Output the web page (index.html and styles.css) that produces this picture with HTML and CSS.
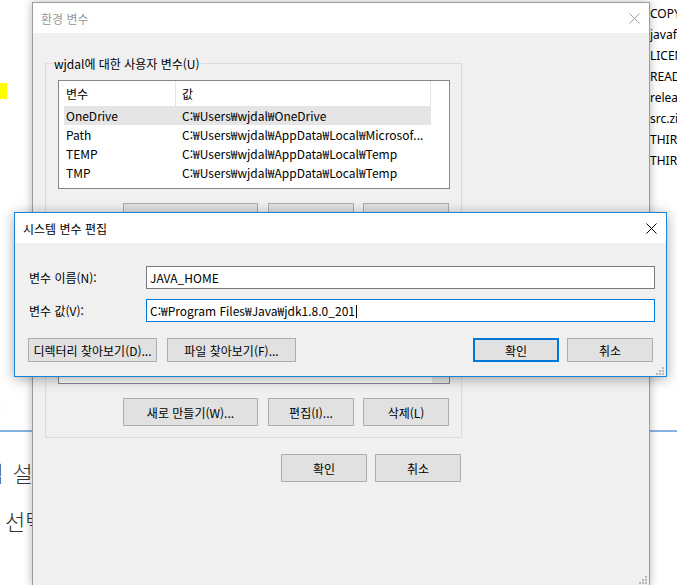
FILE: index.html
```html
<!DOCTYPE html>
<html lang="ko">
<head>
<meta charset="utf-8">
<title>시스템 변수 편집</title>
<link rel="stylesheet" href="styles.css">
</head>
<body>
<div class="desktop">
  <div class="page-left">
    <div class="mark"></div>
    <div class="frag">설정</div>
    <div class="rule"></div>
    <div class="big big1">템 설정</div>
    <div class="big big2">선택</div>
  </div>
  <div class="page-right">
    <ul class="files">
      <li>COPYRIGHT</li>
      <li>javafx-src.zip</li>
      <li>LICENSE</li>
      <li>README.html</li>
      <li>release</li>
      <li>src.zip</li>
      <li>THIRDPARTYLICENSEREADME.txt</li>
      <li>THIRDPARTYLICENSEREADME-JAVAFX.txt</li>
    </ul>
    <div class="rule rule-r"></div>
  </div>

  <div class="win env">
    <div class="titlebar">
      <span class="title">환경 변수</span>
      <svg class="close" width="11" height="11" viewBox="0 0 11 11"><path d="M0.5 0.5 L10.5 10.5 M10.5 0.5 L0.5 10.5" stroke="#9a9a9a" stroke-width="1"/></svg>
    </div>
    <div class="env-body">
      <div class="group">
        <div class="legend">wjdal에 대한 사용자 변수(U)</div>
        <div class="list">
          <div class="lhead"><div class="c1">변수</div><div class="c2">값</div></div>
          <div class="row sel"><div class="c1">OneDrive</div><div class="c2">C:₩Users₩wjdal₩OneDrive</div></div>
          <div class="row"><div class="c1">Path</div><div class="c2">C:₩Users₩wjdal₩AppData₩Local₩Microsof...</div></div>
          <div class="row"><div class="c1">TEMP</div><div class="c2">C:₩Users₩wjdal₩AppData₩Local₩Temp</div></div>
          <div class="row"><div class="c1">TMP</div><div class="c2">C:₩Users₩wjdal₩AppData₩Local₩Temp</div></div>
        </div>
        <div class="btnrow">
          <button class="btn w135">새로 만들기(W)...</button>
          <button class="btn w86 g10">편집(I)...</button>
          <button class="btn w86 g9">삭제(L)</button>
        </div>
      </div>
      <div class="group group-sys">
        <div class="legend">시스템 변수(S)</div>
        <div class="list list-sys">
          <div class="scroll"></div>
        </div>
        <div class="btnrow">
          <button class="btn w135">새로 만들기(W)...</button>
          <button class="btn w86 g10">편집(I)...</button>
          <button class="btn w86 g9">삭제(L)</button>
        </div>
      </div>
      <div class="okrow">
        <button class="btn w86">확인</button>
        <button class="btn w86 g8">취소</button>
      </div>
    </div>
    <svg class="grip grip-env" width="8" height="8" viewBox="0 0 8 8"><g fill="#b8b8b8"><rect x="6" y="0" width="2" height="2"/><rect x="3" y="3" width="2" height="2"/><rect x="6" y="3" width="2" height="2"/><rect x="0" y="6" width="2" height="2"/><rect x="3" y="6" width="2" height="2"/><rect x="6" y="6" width="2" height="2"/></g></svg>
  </div>

  <div class="win edit">
    <div class="titlebar">
      <span class="title">시스템 변수 편집</span>
      <svg class="close" width="11" height="11" viewBox="0 0 11 11"><path d="M0.5 0.5 L10.5 10.5 M10.5 0.5 L0.5 10.5" stroke="#000" stroke-width="1"/></svg>
    </div>
    <div class="edit-body">
      <div class="field">
        <label class="flabel">변수 이름(N):</label>
        <div class="input">JAVA_HOME</div>
      </div>
      <div class="field">
        <label class="flabel">변수 값(V):</label>
        <div class="input focus">C:₩Program Files₩Java₩jdk1.8.0_201<span class="caret"></span></div>
      </div>
      <div class="ebtns">
        <button class="btn sm w129">디렉터리 찾아보기(D)...</button>
        <button class="btn sm w129 g10">파일 찾아보기(F)...</button>
        <button class="btn sm w86 default push">확인</button>
        <button class="btn sm w86 g8">취소</button>
      </div>
    </div>
    <svg class="grip grip-edit" width="8" height="8" viewBox="0 0 8 8"><g fill="#b8b8b8"><rect x="6" y="0" width="2" height="2"/><rect x="3" y="3" width="2" height="2"/><rect x="6" y="3" width="2" height="2"/><rect x="0" y="6" width="2" height="2"/><rect x="3" y="6" width="2" height="2"/><rect x="6" y="6" width="2" height="2"/></g></svg>
  </div>
</div>
</body>
</html>
```

FILE: styles.css
```css
* { box-sizing: border-box; }
html, body { margin: 0; padding: 0; }
body {
  width: 677px;
  height: 585px;
  overflow: hidden;
  background: #fff;
  font-family: "Noto Sans CJK KR", "Noto Sans", sans-serif;
  font-size: 12px;
  color: #000;
}
.desktop { position: relative; width: 677px; height: 585px; overflow: hidden; }

/* page behind, left strip */
.page-left {
  position: absolute; left: 0; top: 0; width: 40px; height: 585px; overflow: hidden;
}
.mark { margin-top: 83px; width: 7px; height: 16px; background: #ffff00; }
.frag {
  margin-top: 303px; margin-left: -21px; height: 14px; line-height: 14px;
  color: #3d7fd0; white-space: nowrap; font-size: 12px;
}
.rule { height: 2px; background: #85b3e0; }
.page-left .rule { margin-top: 14px; }
.big {
  font-size: 22px; line-height: 30px; color: #333; white-space: nowrap; font-weight: 300;
}
.big1 { margin-top: 25px; margin-left: -17px; word-spacing: 3px; }
.big2 { margin-top: 18px; margin-left: 5px; }

/* page behind, right strip */
.page-right {
  position: absolute; left: 649px; top: 0; width: 28px; height: 585px; overflow: hidden;
}
.files {
  list-style: none; margin: 3px 0 0 1px; padding: 0;
  font-family: "Segoe UI", "Noto Sans", sans-serif; font-size: 12px; line-height: 21px;
  white-space: nowrap;
}
.rule-r { margin-top: 259px; }

/* windows */
.win { position: absolute; background: #f0f0f0; }
.titlebar {
  display: flex; align-items: center; height: 30px; background: #fff; padding-left: 8px;
}
.close { margin-left: auto; margin-right: 9px; display: block; }

.env {
  left: 32px; top: 2px; width: 618px; height: 585px;
  border: 1px solid #9c9c9c;
  box-shadow: 0 0 9px rgba(0, 0, 0, 0.28);
}
.env .title { color: #999; }
.env-body { padding: 30px 0 0 12px; }

.group { width: 417px; border: 1px solid #dcdcdc; padding-bottom: 11px; }
.group-sys { margin-top: 12px; }
.legend {
  width: fit-content; height: 16px; line-height: 16px;
  margin: -8px 0 0 7px; padding: 0 1px; background: #f0f0f0; white-space: nowrap;
}
.list {
  position: relative;
  margin: 8px 0 0 12px; width: 392px; height: 109px;
  border: 1px solid #828790; background: #fff; overflow: hidden;
}
.list-sys { height: 112px; }
.lhead { display: flex; height: 25px; line-height: 25px; padding-left: 5px; }
.lhead .c1 { border-right: 1px solid #e5e5e5; }
.lhead .c2 { border-right: 1px solid #e5e5e5; }
.c1 { width: 112px; padding-left: 2px; white-space: nowrap; overflow: hidden; }
.c2 { width: 255px; padding-left: 6px; white-space: nowrap; overflow: hidden; }
.row { display: flex; margin-left: 5px; width: 367px; height: 19px; line-height: 19px; }
.row.sel { background: #e5e5e5; }
.scroll { position: absolute; right: 0; top: 0; bottom: 0; width: 17px; background: #e9e9e9; }

.btnrow { display: flex; justify-content: flex-end; margin-top: 14px; padding-right: 12px; }
.okrow { display: flex; justify-content: flex-end; width: 417px; margin-top: 16px; padding-right: 1px; }

.btn {
  display: flex; align-items: center; justify-content: center;
  height: 28px; padding: 0; margin: 0;
  border: 1px solid #adadad; background: #e1e1e1;
  font: inherit; color: #000; white-space: nowrap;
}
.btn.sm { height: 24px; }
.w135 { width: 135px; }
.w129 { width: 129px; }
.w86 { width: 86px; }
.g10 { margin-left: 10px; }
.g9 { margin-left: 9px; }
.g8 { margin-left: 8px; }
.push { margin-left: auto; }
.btn.default { border: 2px solid #0078d7; }

.grip { position: absolute; display: block; }
.grip-env { right: 2px; bottom: 2px; }
.grip-edit { right: 2px; bottom: 1px; }

/* edit dialog */
.edit {
  left: 14px; top: 212px; width: 653px; height: 165px;
  border: 1px solid #1883d7;
  box-shadow: 0 2px 12px rgba(0, 0, 0, 0.35);
}
.edit .title { color: #000; }
.edit-body { padding: 23px 11px 0 13px; }
.field { display: flex; align-items: center; }
.field + .field { margin-top: 10px; }
.flabel { width: 118px; padding-left: 1px; white-space: nowrap; }
.input {
  flex: 1; height: 23px; line-height: 21px; padding-left: 3px;
  border: 1px solid #7a7a7a; background: #fff; white-space: nowrap;
}
.input.focus { border-color: #0078d7; }
.caret {
  display: inline-block; width: 1px; height: 13px; background: #000;
  vertical-align: -2px; margin-left: 1px;
}
.ebtns { display: flex; margin-top: 16px; padding-right: 2px; }
```
